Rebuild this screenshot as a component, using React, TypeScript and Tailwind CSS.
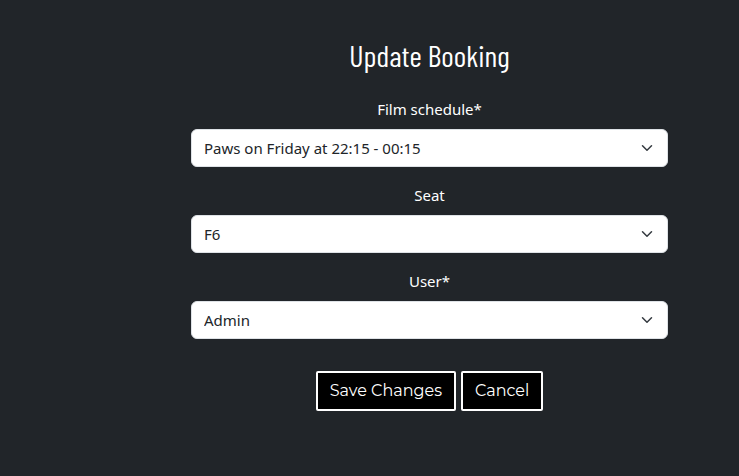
type SelectFieldProps = {
  id: string;
  label: string;
  options: string[];
};

function SelectField({ id, label, options }: SelectFieldProps) {
  return (
    <div className="flex flex-col gap-2">
      <label htmlFor={id} className="text-center text-[15px] leading-6 text-white">
        {label}
      </label>
      <div className="grid items-center">
        <select
          id={id}
          className="col-start-1 row-start-1 h-[38px] w-full appearance-none rounded-md border border-[#dee2e6] bg-white pr-9 pl-3 text-[15px] leading-6 text-[#212529]"
        >
          {options.map((option) => (
            <option key={option}>{option}</option>
          ))}
        </select>
        <svg
          aria-hidden="true"
          viewBox="0 0 16 16"
          className="pointer-events-none col-start-1 row-start-1 mr-[13px] h-3 w-4 justify-self-end"
          fill="none"
          stroke="#343a40"
          strokeWidth="2"
          strokeLinecap="round"
          strokeLinejoin="round"
        >
          <path d="m2 5 6 6 6-6" />
        </svg>
      </div>
    </div>
  );
}

const buttonClass =
  "h-10 rounded-xs border-2 border-white bg-black px-3 font-['Montserrat','Inter',sans-serif] text-[16px] leading-6 text-white";

export default function App() {
  return (
    <main className="min-h-screen bg-[#212529] pt-9 pr-[71px] pb-16 pl-[191px] font-['Segoe_UI','Noto_Sans',sans-serif]">
      <h1 className="mb-[23px] text-center font-['Barlow_Condensed','Liberation_Sans_Narrow',sans-serif] text-[30px] leading-[38px] text-white">
        Update Booking
      </h1>
      <form className="flex flex-col gap-4" onSubmit={(event) => event.preventDefault()}>
        <SelectField
          id="schedule"
          label="Film schedule*"
          options={["Paws on Friday at 22:15 - 00:15"]}
        />
        <SelectField id="seat" label="Seat" options={["F6"]} />
        <SelectField id="user" label="User*" options={["Admin"]} />
        <div className="mt-4 flex justify-center gap-[5px]">
          <button type="submit" className={buttonClass}>
            Save Changes
          </button>
          <button type="button" className={buttonClass}>
            Cancel
          </button>
        </div>
      </form>
    </main>
  );
}
